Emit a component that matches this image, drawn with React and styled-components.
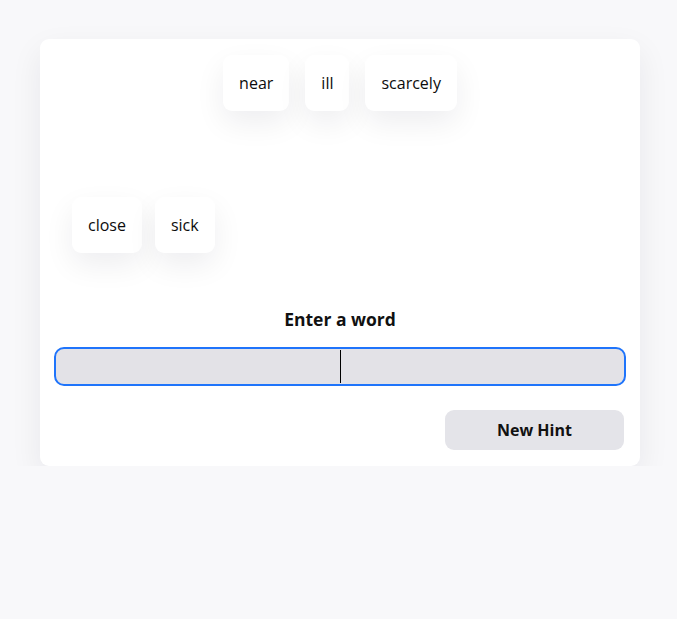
import React from "react";
import styled, { createGlobalStyle } from "styled-components";

const Global = createGlobalStyle`
  html, body { margin: 0; padding: 0; background: #f8f8fa; }
  body { font-family: "Open Sans", "Noto Sans", sans-serif; color: #111; }
`;

const Page = styled.div`
  padding: 39px 37px 0 40px;
`;

const Card = styled.div`
  width: 600px;
  box-sizing: border-box;
  background: #fff;
  border-radius: 9px;
  box-shadow: 0 12px 32px rgba(20, 20, 40, 0.07);
  padding: 16px 14px 16px 14px;
  display: flex;
  flex-direction: column;
`;

const Field = styled.div`
  display: flex;
  flex-direction: column;
  gap: 86px;
  height: 198px;
`;

const Row = styled.div`
  display: flex;
  gap: ${(p) => p.$gap || 16}px;
  justify-content: ${(p) => (p.$center ? "center" : "flex-start")};
  padding-left: ${(p) => p.$indent || 0}px;
`;

const Chip = styled.div`
  height: 56px;
  box-sizing: border-box;
  padding: 0 16px;
  display: flex;
  align-items: center;
  justify-content: center;
  background: #fff;
  border-radius: 9px;
  font-size: 16px;
  font-weight: 500;
  color: #0c0c0c;
  box-shadow: 0 12px 30px rgba(20, 20, 40, 0.07);
`;

const Label = styled.div`
  margin-top: 54px;
  text-align: center;
  font-size: 17.5px;
  font-weight: 700;
  line-height: 24px;
`;

const InputWrap = styled.div`
  position: relative;
  margin-top: 16px;
`;

const Input = styled.input`
  display: block;
  width: 100%;
  height: 39px;
  box-sizing: border-box;
  border: 2px solid #1f74fb;
  border-radius: 10px;
  background: #e3e2e7;
  outline: none;
  text-align: center;
  font: inherit;
  caret-color: transparent;
`;

const Caret = styled.span`
  position: absolute;
  left: 286px;
  top: 3px;
  width: 1px;
  height: 33px;
  background: #000;
`;

const Actions = styled.div`
  display: flex;
  justify-content: flex-end;
  margin-top: 24px;
  padding-right: 2px;
`;

const Button = styled.button`
  width: 179px;
  height: 40px;
  border: none;
  border-radius: 9px;
  background: #e4e4e9;
  font-family: inherit;
  font-size: 16px;
  font-weight: 700;
  color: #111;
`;

export default function App() {
  return (
    <>
      <Global />
      <Page>
        <Card>
          <Field>
            <Row $center>
              <Chip>near</Chip>
              <Chip>ill</Chip>
              <Chip>scarcely</Chip>
            </Row>
            <Row $indent={18} $gap={13}>
              <Chip>close</Chip>
              <Chip>sick</Chip>
            </Row>
          </Field>
          <Label>Enter a word</Label>
          <InputWrap>
            <Input />
            <Caret />
          </InputWrap>
          <Actions>
            <Button>New Hint</Button>
          </Actions>
        </Card>
      </Page>
    </>
  );
}
